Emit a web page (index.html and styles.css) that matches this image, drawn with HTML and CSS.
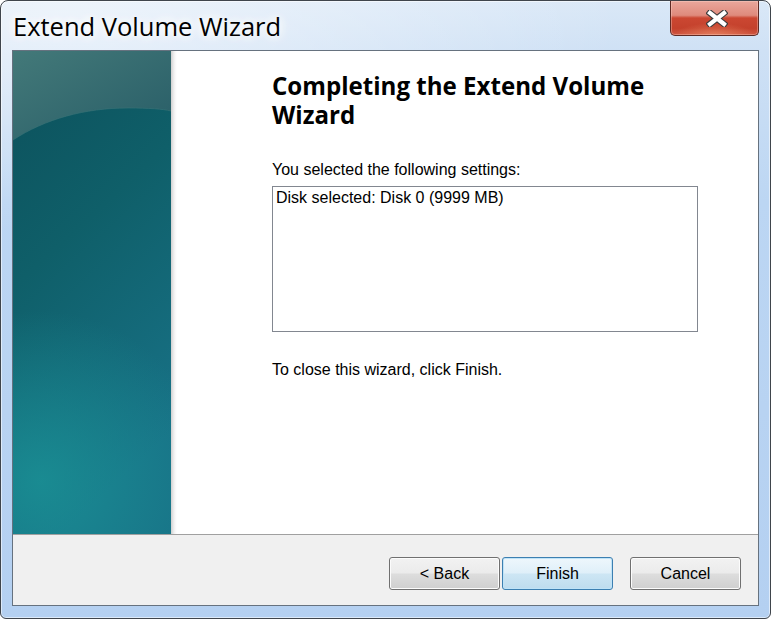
FILE: index.html
```html
<!DOCTYPE html>
<html>
<head>
<meta charset="utf-8">
<link rel="stylesheet" href="styles.css">
</head>
<body>
<div class="window">
  <div class="titlebar">
    <span class="title">Extend Volume Wizard</span>
    <button class="close" aria-label="Close">
      <svg width="22" height="17" viewBox="0 0 22 17">
        <path d="M4 3 L18 14 M18 3 L4 14" stroke="#3c3c3c" stroke-width="6.5" stroke-linecap="square" fill="none"/>
        <path d="M4 3 L18 14 M18 3 L4 14" stroke="#ffffff" stroke-width="4.2" stroke-linecap="square" fill="none"/>
      </svg>
    </button>
  </div>
  <div class="client">
    <div class="main">
      <div class="art">
        <svg width="158" height="483" viewBox="0 0 158 483" preserveAspectRatio="none">
          <defs>
            <linearGradient id="base" x1="0" y1="0" x2="0.3" y2="1">
              <stop offset="0" stop-color="#0c505b"/>
              <stop offset="0.45" stop-color="#0f5f69"/>
              <stop offset="1" stop-color="#187287"/>
            </linearGradient>
            <radialGradient id="glow" gradientUnits="userSpaceOnUse" cx="28" cy="430" r="170">
              <stop offset="0" stop-color="#1a9095" stop-opacity="0.85"/>
              <stop offset="1" stop-color="#1a9095" stop-opacity="0"/>
            </radialGradient>
            <linearGradient id="top" x1="0" y1="0" x2="1" y2="1">
              <stop offset="0" stop-color="#437979"/>
              <stop offset="1" stop-color="#285d67"/>
            </linearGradient>
          </defs>
          <rect width="158" height="483" fill="url(#base)"/>
          <rect width="158" height="483" fill="url(#glow)"/>
          <path d="M0 0 H158 V60 C150 58 136 57 115 57 C72 57 32 68 0 89 Z" fill="url(#top)"/>
          <path d="M0 89 C32 68 72 57 115 57 C136 57 150 58 158 60" stroke="#3a7478" stroke-width="1" fill="none" opacity="0.6"/>
        </svg>
      </div>
      <div class="content">
        <h1 class="heading">Completing the Extend Volume Wizard</h1>
        <p class="lead">You selected the following settings:</p>
        <div class="listbox">Disk selected: Disk 0 (9999 MB)</div>
        <p class="note">To close this wizard, click Finish.</p>
      </div>
    </div>
    <div class="footer">
      <button class="btn">&lt; Back</button>
      <button class="btn btn-default">Finish</button>
      <button class="btn btn-cancel">Cancel</button>
    </div>
  </div>
</div>
</body>
</html>
```
FILE: styles.css
```css
html, body {
  margin: 0;
  padding: 0;
  background: #ffffff;
}

.window {
  width: 771px;
  height: 619px;
  box-sizing: border-box;
  border: 1px solid #3f454c;
  border-radius: 8px 8px 6px 6px;
  padding: 0 11px 12px 11px;
  display: flex;
  flex-direction: column;
  background:
    radial-gradient(ellipse 560px 210px at 60px 20px, rgba(255,255,255,0.55), rgba(255,255,255,0) 100%),
    linear-gradient(180deg, #dae8f7 0px, #cfe1f5 50px, #bcd6f3 200px, #b4d0f1 100%);
  box-shadow: inset 0 0 0 1px rgba(255,255,255,0.55);
  overflow: hidden;
}

.titlebar {
  height: 49px;
  display: flex;
  align-items: flex-start;
  flex: none;
}

.title {
  font-family: "Open Sans", "Noto Sans", sans-serif;
  font-size: 25.5px;
  line-height: 49px;
  padding-left: 1px;
  padding-top: 1px;
  color: #000;
  text-shadow: 0 0 8px #fff, 0 0 12px #fff, 0 0 16px rgba(255,255,255,0.9);
}

.close {
  margin-left: auto;
  width: 89px;
  height: 35px;
  box-sizing: border-box;
  padding: 0;
  border: 1px solid #5e2a24;
  border-top: none;
  border-radius: 0 0 5px 5px;
  background:
    radial-gradient(ellipse 40px 12px at 50% 100%, rgba(240,150,110,0.6), rgba(240,150,110,0) 100%),
    linear-gradient(180deg, #e9a79c 0%, #df8a7c 42%, #cb4732 50%, #c4412c 80%, #cf5540 100%);
  box-shadow: inset 0 0 0 1px rgba(255,220,210,0.35);
  display: flex;
  align-items: center;
  justify-content: center;
  padding-left: 4px;
}

.close svg {
  display: block;
}

.client {
  flex: 1;
  display: flex;
  flex-direction: column;
  border: 1px solid #66727f;
  background: #f0f0f0;
}

.main {
  height: 483px;
  display: flex;
  flex: none;
  background: #ffffff;
}

.art {
  width: 158px;
  flex: none;
}

.art svg {
  display: block;
}

.content {
  flex: 1;
  padding: 20px 59px 0 101px;
  background: linear-gradient(90deg, #cfcfcf 0px, #e6e6e6 2px, #f7f7f7 4px, #ffffff 6px);
  font-family: "Liberation Sans", Arial, sans-serif;
  font-size: 16px;
  color: #000;
}

.heading {
  margin: 0;
  font-family: "Open Sans", "Noto Sans", sans-serif;
  font-weight: 700;
  font-size: 24.1px;
  line-height: 29px;
  color: #000;
}

.lead {
  margin: 32px 0 0 0;
  line-height: 18px;
}

.listbox {
  margin-top: 7px;
  width: 426px;
  height: 146px;
  box-sizing: border-box;
  border: 1px solid #828790;
  padding: 2px 3px;
  line-height: 18px;
  background: #fff;
}

.note {
  margin: 29px 0 0 0;
  line-height: 18px;
}

.footer {
  flex: none;
  border-top: 1px solid #a0a0a0;
  box-sizing: border-box;
  height: 71px;
  display: flex;
  justify-content: flex-end;
  align-items: flex-start;
  padding: 22px 17px 0 0;
  background: #f0f0f0;
}

.btn {
  width: 111px;
  height: 33px;
  box-sizing: border-box;
  border: 1px solid #707070;
  border-radius: 3px;
  background: linear-gradient(180deg, #f2f2f2 0%, #ebebeb 48%, #dddddd 52%, #cfcfcf 100%);
  box-shadow: inset 0 0 0 1px #fcfcfc;
  font-family: "Liberation Sans", Arial, sans-serif;
  font-size: 16px;
  color: #000;
  padding: 0;
  margin-left: 2px;
}

.btn-default {
  border-color: #3c7fb1;
  background: linear-gradient(180deg, #eef7fc 0%, #dfeff9 48%, #cde6f4 52%, #bedcee 100%);
  box-shadow: inset 0 0 0 1px #bfe3f7;
}

.btn-cancel {
  margin-left: 17px;
}
```
